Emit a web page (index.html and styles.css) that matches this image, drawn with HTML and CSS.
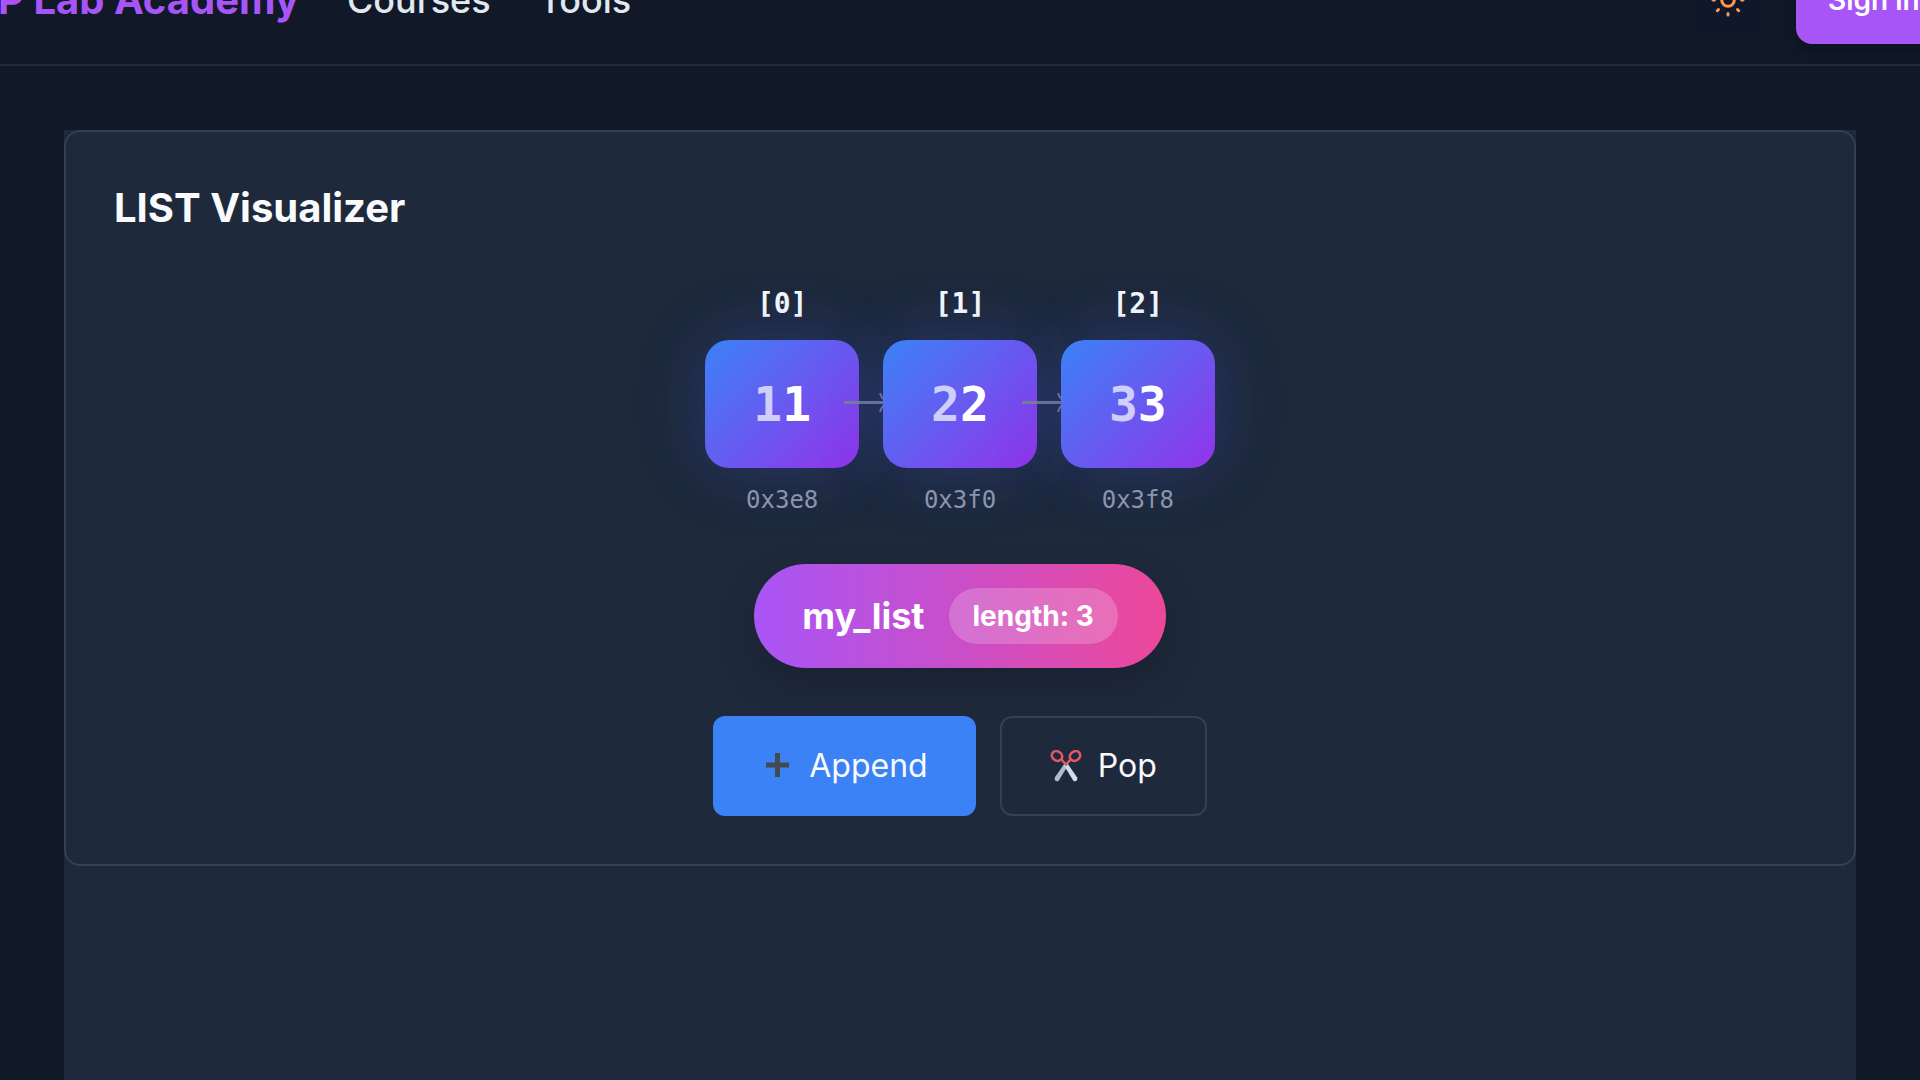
FILE: index.html
```
<!DOCTYPE html>
<html lang="en">
<head>
<meta charset="utf-8">
<meta name="viewport" content="width=device-width, initial-scale=1">
<title>LIST Visualizer</title>
<link rel="stylesheet" href="styles.css">
</head>
<body>
<header class="topbar">
  <a class="brand" href="#">P Lab Academy</a>
  <nav class="nav" aria-label="Main">
    <a href="#">Courses</a>
    <a href="#">Tools</a>
  </nav>
  <div class="actions">
    <button class="theme" type="button" aria-label="Toggle theme">
      <svg viewBox="0 0 24 24" fill="none" stroke="currentColor" stroke-width="2" stroke-linecap="round" stroke-linejoin="round" aria-hidden="true">
        <circle cx="12" cy="12" r="4.200"/>
        <path d="M12 2v1M12 21v1M4.930 4.930l.7.7M18.370 18.370l.7.7M2 12h1M21 12h1M5.630 18.370l-.7.7M19.070 4.930l-.7.7"/>
      </svg>
    </button>
    <button class="signin" type="button">Sign in</button>
  </div>
</header>
<main class="page">
  <section class="card">
    <h1>LIST Visualizer</h1>
    <div class="viz">
      <ol class="cells">
        <li class="cell">
          <span class="index">[0]</span>
          <span class="box"><span class="lead">1</span>1
            <svg class="arrow" viewBox="0 0 48 24" fill="none" aria-hidden="true"><path d="M1 12.500h15" stroke="#7d7c96" stroke-width="3"/><path d="M16 12.500h29" stroke-width="3"/><path d="M37 3q2 7 9 9.500q-7 2-9 9.500" stroke-width="2"/></svg>
          </span>
          <span class="addr">0x3e8</span>
        </li>
        <li class="cell">
          <span class="index">[1]</span>
          <span class="box"><span class="lead">2</span>2
            <svg class="arrow" viewBox="0 0 48 24" fill="none" aria-hidden="true"><path d="M1 12.500h15" stroke="#7d7c96" stroke-width="3"/><path d="M16 12.500h29" stroke-width="3"/><path d="M37 3q2 7 9 9.500q-7 2-9 9.500" stroke-width="2"/></svg>
          </span>
          <span class="addr">0x3f0</span>
        </li>
        <li class="cell">
          <span class="index">[2]</span>
          <span class="box"><span class="lead">3</span>3</span>
          <span class="addr">0x3f8</span>
        </li>
      </ol>
      <div class="pill">my_list <span class="length">length: 3</span></div>
      <div class="controls">
        <button class="btn primary" type="button">
          <svg viewBox="0 0 32 32" aria-hidden="true"><path fill="#454a50" d="M14 3h5v9.500h9v5h-9V27h-5v-9.500H5v-5h9z"/></svg>
          Append
        </button>
        <button class="btn outline" type="button">
          <svg viewBox="0 0 32 32" fill="none" aria-hidden="true">
            <path fill="#aebccd" d="M14.500 13.500l3.500 2L8.500 31C6 32 4 30 4.800 27.500z"/>
            <path fill="#d3deea" d="M17.500 13.500l9.700 14c.8 2.500-1.200 4.500-3.700 3.500L14 15.500z"/>
            <g stroke="#e35766" stroke-width="2.600"><ellipse cx="7" cy="6" rx="5.400" ry="4.600" transform="rotate(35 7 6)"/><ellipse cx="25" cy="6" rx="5.400" ry="4.600" transform="rotate(-35 25 6)"/><path d="M11.500 9.500l4 4.500M20.500 9.500L16.500 14"/></g>
            <circle cx="16" cy="15" r="1" fill="#5b6a7c"/>
          </svg>
          Pop
        </button>
      </div>
    </div>
  </section>
</main>
</body>
</html>
```
FILE: styles.css
```
* { box-sizing: border-box; }

body {
  margin: 0;
  min-height: 100vh;
  display: flex;
  flex-direction: column;
  overflow: hidden;
  background: #111827;
  color: #f8fafc;
  font-family: Inter, "Liberation Sans", sans-serif;
}

button { font: inherit; color: inherit; border: 0; cursor: pointer; }
a { color: inherit; text-decoration: none; }

.topbar {
  display: flex;
  align-items: center;
  height: 130px;
  margin-top: -64px;
  margin-right: -72px;
  margin-left: -2px;
  border-bottom: 2px solid #222a3a;
}

.brand {
  color: #a855f7;
  font-size: 40px;
  font-weight: 700;
  line-height: 56px;
}

.nav {
  display: flex;
  gap: 48px;
  margin-left: 48px;
  color: #e2e8f0;
  font-size: 36px;
  font-weight: 500;
  line-height: 56px;
}

.actions {
  display: flex;
  align-items: center;
  gap: 32px;
  margin-left: auto;
}

.theme {
  display: grid;
  place-items: center;
  width: 72px;
  height: 72px;
  padding: 0;
  border-radius: 16px;
  background: #0f172a;
  color: #fb9a4b;
}

.theme svg { width: 36px; height: 36px; }

.signin {
  width: 196px;
  padding: 24px 32px;
  border-radius: 16px;
  background: #a855f7;
  color: #fff;
  font-size: 28px;
  font-weight: 600;
  line-height: 40px;
  text-align: left;
  box-shadow: 0 8px 12px rgb(0 0 0 / 20%);
}

.page {
  flex: 1;
  margin: 64px 64px 0;
  background: #1e293b;
}

.card {
  padding: 48px;
  border: 2px solid #334155;
  border-radius: 16px;
}

h1 {
  margin: 0 0 48px;
  font-size: 40px;
  font-weight: 700;
  line-height: 56px;
}

.viz {
  display: flex;
  flex-direction: column;
  align-items: center;
  gap: 48px;
}

.cells {
  display: flex;
  gap: 24px;
  margin: 0;
  padding: 0;
  list-style: none;
  font-family: "DejaVu Sans Mono", monospace;
}

.cell {
  display: flex;
  flex-direction: column;
  align-items: center;
  gap: 16px;
}

.index { font-size: 28px; font-weight: 700; line-height: 40px; }

.box {
  position: relative;
  padding: 32px 48px;
  border-radius: 24px;
  background: linear-gradient(135deg, #3b82f6, #9333ea);
  box-shadow: 0 0 80px rgb(59 130 246 / 14%), 0 0 60px rgb(88 60 220 / 16%);
  color: #fff;
  font-size: 48px;
  font-weight: 700;
  line-height: 64px;
}

.lead { opacity: .7; }

.arrow {
  position: absolute;
  top: 50px;
  right: -32px;
  width: 48px;
  height: 24px;
  stroke: #6b7590;
}

.addr { color: #9098ad; font-size: 24px; line-height: 32px; }

.pill {
  display: flex;
  align-items: center;
  gap: 24px;
  padding: 24px 48px;
  border-radius: 999px;
  background: linear-gradient(90deg, #a855f7, #ec4899);
  box-shadow: 0 16px 40px rgb(0 0 0 / 18%);
  color: #fff;
  font-size: 36px;
  font-weight: 700;
  line-height: 56px;
}

.length {
  padding: 8px 24px;
  border-radius: 999px;
  background: rgb(255 255 255 / 20%);
  font-size: 28px;
  line-height: 40px;
}

.controls { display: flex; gap: 24px; }

.btn {
  display: flex;
  align-items: center;
  gap: 16px;
  min-height: 100px;
  padding: 24px 48px;
  border-radius: 12px;
  font-size: 32px;
  line-height: 48px;
}

.btn svg { width: 32px; height: 32px; }
.primary { background: #3b82f6; }
.outline { background: none; border: 2px solid #334155; }
```
